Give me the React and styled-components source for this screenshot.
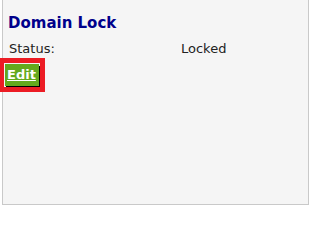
import React from 'react'
import styled, { createGlobalStyle } from 'styled-components'

const GlobalStyle = createGlobalStyle`
    html, body {
        margin: 0;
        padding: 0;
        background: #fff;
    }
    body {
        font-family: "DejaVu Sans", Verdana, sans-serif;
    }
`

// 위쪽 테두리는 스크린샷에서 잘려 있음
const Panel = styled.div`
    box-sizing: border-box;
    width: 307px;
    height: 205px;
    margin-left: 2px;
    padding: 14px 0 0;
    background: #f5f5f5;
    border: 1px solid #c9c9c9;
    border-top: none;
`

const Title = styled.h2`
    margin: 0;
    padding-left: 5px;
    font-size: 15px;
    line-height: 18px;
    font-weight: bold;
    color: #00008b;
`

const InfoRow = styled.div`
    display: grid;
    grid-template-columns: 172px auto;
    margin-top: 9px;
    padding-left: 6px;
    font-size: 13px;
    line-height: 16px;
    color: #222;
`

const Label = styled.span``
const Value = styled.span``

const Actions = styled.div`
    margin-top: 7px;
    padding-left: 2px;
    line-height: 0;
`

const EditButton = styled.a`
    display: inline-block;
    box-sizing: border-box;
    height: 22px;
    padding: 0 3px 0 2px;
    background: #64a91e;
    color: #fff;
    font-size: 13px;
    font-weight: bold;
    line-height: 22px;
    text-decoration: underline;
    box-shadow: 1px 2px 0 #000;
    cursor: pointer;
    outline: ${(props) => (props.$highlight ? '5px solid #ec1c24' : 'none')};
    outline-offset: 1px;
`

const App = () => {
    return (
        <>
            <GlobalStyle />
            <Panel>
                <Title>Domain Lock</Title>
                <InfoRow>
                    <Label>Status:</Label>
                    <Value>Locked</Value>
                </InfoRow>
                <Actions>
                    <EditButton $highlight>Edit</EditButton>
                </Actions>
            </Panel>
        </>
    )
}

export default App
